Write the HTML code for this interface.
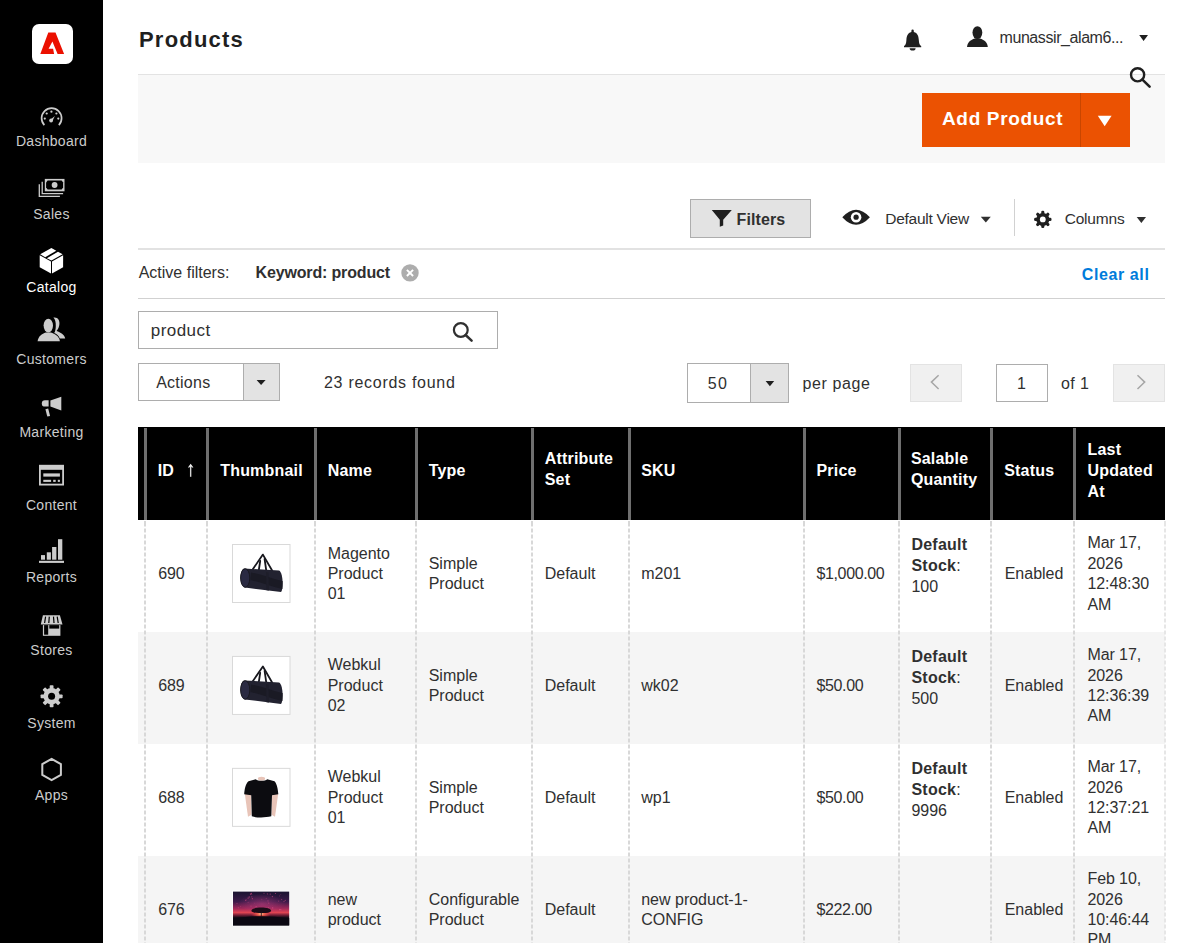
<!DOCTYPE html>
<html><head><meta charset="utf-8"><title>Products</title>
<style>
html,body{margin:0;padding:0;}
body{width:1200px;height:943px;overflow:hidden;position:relative;background:#fff;font-family:"Liberation Sans", sans-serif;color:#303030;}
.t{position:absolute;white-space:nowrap;}
.r{position:absolute;}
svg.r{overflow:visible;}
</style></head><body>
<div class="r" style="left:0px;top:0px;width:103px;height:943px;background:#000;"></div>
<div class="r" style="left:32px;top:24px;width:41px;height:40px;background:#fff;border-radius:7px;"></div>
<svg class="r" style="left:0px;top:0px;" width="103" height="80" viewBox="0 0 103 80"><polygon fill="#eb1000" points="48.3,32.6 55.5,32.6 64.1,54 57.6,54 52.4,41.6 48.6,48.8 53.1,48.8 54.1,54 40.3,54"/></svg>
<div class="t" style="left:0;width:103px;text-align:center;top:133.37px;font-size:14px;line-height:16px;color:#cccccc;letter-spacing:0.3px;">Dashboard</div>
<div class="t" style="left:0;width:103px;text-align:center;top:206.04px;font-size:14px;line-height:16px;color:#cccccc;letter-spacing:0.3px;">Sales</div>
<div class="t" style="left:0;width:103px;text-align:center;top:278.71px;font-size:14px;line-height:16px;color:#ffffff;letter-spacing:0.3px;">Catalog</div>
<div class="t" style="left:0;width:103px;text-align:center;top:351.38px;font-size:14px;line-height:16px;color:#cccccc;letter-spacing:0.3px;">Customers</div>
<div class="t" style="left:0;width:103px;text-align:center;top:424.05px;font-size:14px;line-height:16px;color:#cccccc;letter-spacing:0.3px;">Marketing</div>
<div class="t" style="left:0;width:103px;text-align:center;top:496.72px;font-size:14px;line-height:16px;color:#cccccc;letter-spacing:0.3px;">Content</div>
<div class="t" style="left:0;width:103px;text-align:center;top:569.39px;font-size:14px;line-height:16px;color:#cccccc;letter-spacing:0.3px;">Reports</div>
<div class="t" style="left:0;width:103px;text-align:center;top:642.06px;font-size:14px;line-height:16px;color:#cccccc;letter-spacing:0.3px;">Stores</div>
<div class="t" style="left:0;width:103px;text-align:center;top:714.73px;font-size:14px;line-height:16px;color:#cccccc;letter-spacing:0.3px;">System</div>
<div class="t" style="left:0;width:103px;text-align:center;top:787.40px;font-size:14px;line-height:16px;color:#cccccc;letter-spacing:0.3px;">Apps</div>
<svg class="r" style="left:0px;top:0px;" width="103" height="943" viewBox="0 0 103 943"><path d="M44.36,125.1 A10,10 0 1 1 58.84,125.1" fill="none" stroke="#cccccc" stroke-width="1.7"/><g fill="#cccccc"><circle cx="51.4" cy="111.7" r="1.1"/><circle cx="46.7" cy="113.5" r="1.1"/><circle cx="56.4" cy="113.5" r="1.1"/><circle cx="44.8" cy="118.6" r="1.1"/><circle cx="58.3" cy="118.6" r="1.1"/><circle cx="51.1" cy="120.5" r="1.9"/><polygon points="50,120 52.3,121.2 54.9,115.9"/></g><g fill="none" stroke="#cccccc" stroke-width="1.3"><polyline points="42.2,181.7 42.2,193.6 63.1,193.6"/><polyline points="39.3,184.2 39.3,196.3 59.9,196.3"/></g><rect x="44.8" y="178.9" width="19.7" height="12.4" fill="#cccccc"/><polygon fill="#000" points="47.6,180.6 61.6,180.6 63.1,182.4 63.1,187.6 61.6,189.5 47.6,189.5 46.1,187.6 46.1,182.4"/><circle cx="54.6" cy="185" r="2.9" fill="#cccccc"/><g fill="#fff"><polygon points="39.7,255.2 51,261.6 51,273.6 39.7,267.3"/><polygon points="52,261.6 63.1,255.2 63.1,267.3 52,273.6"/><polygon points="40.2,254.2 51.4,247.9 56.3,250.7 45.2,257.2"/><polygon points="46.9,258.2 58,251.7 62.6,254.3 51.4,260.6"/></g><g fill="#cccccc"><path d="M53.4,317.6 C57.6,316.7 60.4,320.5 59.2,325.5 C58.6,328.3 57.4,330 56.6,331 C60.5,332.6 64.4,334.6 65.2,338.4 L59.8,338.4 C58.8,335.5 56.5,333.9 54.2,333 C55.3,331.5 55.7,329 55.8,326 C55.9,322.2 55.2,319.3 53.4,317.6 Z"/><ellipse cx="48.3" cy="325.6" rx="4.7" ry="6.8"/><path d="M37.6,341.2 C38.2,336 42,333.8 45.8,332.4 L50.8,332.4 C54.8,333.8 59.3,336 59.9,341.2 Z"/></g><g fill="#cccccc"><path d="M48.6,400.2 L45,400.2 A3.2,3.2 0 0 0 45,406.6 L48.6,406.6 Z"/><polygon points="50.4,400.4 61.3,396.7 61.3,410.5 50.4,406.4"/><polygon points="45.4,409.2 48.2,408.6 50.1,416 47.3,416.4"/></g><rect x="39.9" y="465.8" width="23.2" height="18.8" fill="none" stroke="#cccccc" stroke-width="1.8"/><g fill="#cccccc"><rect x="39" y="464.9" width="25" height="4.9"/><rect x="43.3" y="473.4" width="16.6" height="3.2"/><rect x="43.3" y="479.8" width="7.8" height="2.1"/><rect x="53.2" y="479.8" width="2.5" height="2.1"/><rect x="57.8" y="479.8" width="2.1" height="2.1"/></g><g fill="#cccccc"><rect x="41" y="555.1" width="4" height="4.6"/><rect x="46.8" y="552.3" width="4.1" height="7.4"/><rect x="52.1" y="547" width="4.3" height="12.7"/><rect x="58" y="539.2" width="4.3" height="20.5"/><rect x="39" y="560.8" width="25" height="2.1"/></g><polygon fill="#cccccc" points="42.9,615.2 59.9,615.2 62.5,624.4 40.8,624.4"/><g stroke="#000" stroke-width="1.2"><line x1="45.6" y1="616.6" x2="44.6" y2="623"/><line x1="49.3" y1="616.6" x2="48.8" y2="623"/><line x1="53.5" y1="616.6" x2="54" y2="623"/><line x1="57.2" y1="616.6" x2="58.2" y2="623"/></g><rect x="42.9" y="625.1" width="17.5" height="10.7" fill="#cccccc"/><rect x="44.1" y="625.1" width="4.1" height="9.6" fill="#000"/><rect x="49.3" y="625.1" width="9.9" height="3.5" fill="#000"/><g transform="translate(51.6,696.3)" fill="#cccccc"><circle r="8.2"/><rect x="-1.9" y="-11" width="3.8" height="5" rx="0.8" transform="rotate(0)"/><rect x="-1.9" y="-11" width="3.8" height="5" rx="0.8" transform="rotate(45)"/><rect x="-1.9" y="-11" width="3.8" height="5" rx="0.8" transform="rotate(90)"/><rect x="-1.9" y="-11" width="3.8" height="5" rx="0.8" transform="rotate(135)"/><rect x="-1.9" y="-11" width="3.8" height="5" rx="0.8" transform="rotate(180)"/><rect x="-1.9" y="-11" width="3.8" height="5" rx="0.8" transform="rotate(225)"/><rect x="-1.9" y="-11" width="3.8" height="5" rx="0.8" transform="rotate(270)"/><rect x="-1.9" y="-11" width="3.8" height="5" rx="0.8" transform="rotate(315)"/><circle r="3.5" fill="#000"/></g><polygon fill="none" stroke="#cccccc" stroke-width="2" points="51.6,758.9 60.9,764.2 60.9,774.9 51.6,780.2 42.3,774.9 42.3,764.2"/></svg>
<div class="t" style="left:139px;top:27.33px;font-size:22px;line-height:26.4px;font-weight:700;color:#1f1f1f;letter-spacing:1.2px;">Products</div>
<svg class="r" style="left:0px;top:0px;" width="1200" height="100" viewBox="0 0 1200 100"><g fill="#1f1f1f"><path d="M912.6,29.5 a1.2,1.2 0 0 1 1.2,1.2 L913.8,32 C917.6,33 918.6,36 918.8,40 C919,43.5 919.6,45 921.2,46 L921.2,47.3 L904,47.3 L904,46 C905.6,45 906.2,43.5 906.4,40 C906.6,36 907.6,33 911.4,32 L911.4,30.7 a1.2,1.2 0 0 1 1.2,-1.2 Z"/><path d="M909.6,48.3 L915.6,48.3 A3,2.3 0 0 1 909.6,48.3 Z"/></g><g fill="#1f1f1f"><ellipse cx="977.4" cy="32.6" rx="4.9" ry="6.4"/><path d="M967,47 C967.4,42 971,40 974.6,38.6 L980.2,38.6 C983.8,40 987.4,42 987.8,47 Z"/></g><polygon fill="#1f1f1f" points="1139.2,35 1148,35 1143.6,41"/></svg>
<div class="t" style="left:999.5px;top:27.91px;font-size:16px;line-height:19.2px;letter-spacing:-0.42px;">munassir_alam6...</div>
<div class="r" style="left:138px;top:74px;width:1027px;height:89px;background:#f8f8f8;border-top:1px solid #e3e3e3;box-sizing:border-box;"></div>
<div class="r" style="left:922px;top:92.5px;width:208px;height:54px;background:#eb5202;"></div>
<div class="r" style="left:1080px;top:92.5px;width:1px;height:54px;background:#c94600;"></div>
<div class="t" style="left:942px;top:107.92px;font-size:19px;line-height:22.8px;font-weight:700;color:#fff;letter-spacing:0.65px;">Add Product</div>
<svg class="r" style="left:0px;top:0px;" width="1200" height="200" viewBox="0 0 1200 200"><polygon fill="#fff" points="1097.8,115.7 1111.6,115.7 1104.7,126.2"/></svg>
<svg class="r" style="left:0px;top:0px;" width="1200" height="100" viewBox="0 0 1200 100"><circle cx="1137.6" cy="74.8" r="6.6" fill="none" stroke="#1f1f1f" stroke-width="2.4"/><line x1="1142.4" y1="79.6" x2="1149.6" y2="86.6" stroke="#1f1f1f" stroke-width="2.6" stroke-linecap="round"/></svg>
<div class="r" style="left:690px;top:199px;width:121px;height:39px;background:#e3e3e3;border:1px solid #adadad;box-sizing:border-box;"></div>
<svg class="r" style="left:0px;top:0px;" width="1200" height="300" viewBox="0 0 1200 300"><path fill="#1f1f1f" d="M711.8,209.9 L731.8,209.9 L723.2,219.8 L723.2,225.4 L719.8,226.8 L719.8,219.8 Z"/><path fill="#1f1f1f" d="M842.3,217.2 Q856,202.2 869.9,217.2 Q856,232.2 842.3,217.2 Z"/><circle cx="856.1" cy="217.2" r="5.3" fill="#fff"/><circle cx="856.1" cy="217.2" r="2.6" fill="#1f1f1f"/><polygon fill="#303030" points="980.8,216.8 990.8,216.8 985.8,222.6"/><polygon fill="#303030" points="1136.7,216.9 1146,216.9 1141.35,222.9"/><g transform="translate(1042.8,219.4)" fill="#1f1f1f"><circle r="6.5"/><rect x="-1.55" y="-8.7" width="3.1" height="4.2" rx="1.3" transform="rotate(0)"/><rect x="-1.55" y="-8.7" width="3.1" height="4.2" rx="1.3" transform="rotate(45)"/><rect x="-1.55" y="-8.7" width="3.1" height="4.2" rx="1.3" transform="rotate(90)"/><rect x="-1.55" y="-8.7" width="3.1" height="4.2" rx="1.3" transform="rotate(135)"/><rect x="-1.55" y="-8.7" width="3.1" height="4.2" rx="1.3" transform="rotate(180)"/><rect x="-1.55" y="-8.7" width="3.1" height="4.2" rx="1.3" transform="rotate(225)"/><rect x="-1.55" y="-8.7" width="3.1" height="4.2" rx="1.3" transform="rotate(270)"/><rect x="-1.55" y="-8.7" width="3.1" height="4.2" rx="1.3" transform="rotate(315)"/><circle r="2.9" fill="#fff"/></g></svg>
<div class="t" style="left:736.6px;top:209.51px;font-size:16px;line-height:19.2px;font-weight:700;letter-spacing:0.1px;">Filters</div>
<div class="t" style="left:885.2px;top:209.78px;font-size:15.5px;line-height:18.6px;letter-spacing:-0.25px;">Default View</div>
<div class="r" style="left:1013.5px;top:199px;width:1px;height:37px;background:#d1d1d1;"></div>
<div class="t" style="left:1064.7px;top:209.58px;font-size:15.5px;line-height:18.6px;letter-spacing:-0.2px;">Columns</div>
<div class="r" style="left:138px;top:248px;width:1027px;height:2px;background:#e2e2e2;"></div>
<div class="t" style="left:138.7px;top:262.91px;font-size:16px;line-height:19.2px;">Active filters:</div>
<div class="t" style="left:255.5px;top:262.91px;font-size:16px;line-height:19.2px;font-weight:700;letter-spacing:-0.15px;">Keyword: product</div>
<svg class="r" style="left:0px;top:0px;" width="1200" height="300" viewBox="0 0 1200 300"><circle cx="410" cy="272.9" r="8.7" fill="#adadad"/><path d="M406.9,269.8 L413.1,276 M413.1,269.8 L406.9,276" stroke="#fff" stroke-width="1.9"/></svg>
<div class="t" style="left:1081.8px;top:264.81px;font-size:16px;line-height:19.2px;font-weight:700;color:#007bdb;letter-spacing:0.6px;">Clear all</div>
<div class="r" style="left:138px;top:297.5px;width:1027px;height:1px;background:#d1d1d1;"></div>
<div class="r" style="left:138px;top:311px;width:360px;height:38px;background:#fff;border:1px solid #adadad;box-sizing:border-box;"></div>
<div class="t" style="left:150.8px;top:320.88px;font-size:17px;line-height:20.4px;letter-spacing:0.45px;">product</div>
<svg class="r" style="left:0px;top:0px;" width="1200" height="400" viewBox="0 0 1200 400"><circle cx="460.8" cy="330" r="6.9" fill="none" stroke="#303030" stroke-width="2.2"/><line x1="465.6" y1="335" x2="471.6" y2="340.6" stroke="#303030" stroke-width="2.5" stroke-linecap="round"/></svg>
<div class="r" style="left:138px;top:362.5px;width:142px;height:38.5px;background:#fff;border:1px solid #adadad;box-sizing:border-box;"></div>
<div class="r" style="left:242.5px;top:362.5px;width:37.5px;height:38.5px;background:#e3e3e3;border:1px solid #adadad;box-sizing:border-box;"></div>
<div class="t" style="left:156.2px;top:373.11px;font-size:16px;line-height:19.2px;letter-spacing:0.25px;">Actions</div>
<svg class="r" style="left:0px;top:0px;" width="1200" height="400" viewBox="0 0 1200 400"><polygon fill="#1f1f1f" points="256.6,380 265.6,380 261.1,385"/></svg>
<div class="t" style="left:324px;top:373.11px;font-size:16px;line-height:19.2px;letter-spacing:0.72px;">23 records found</div>
<div class="r" style="left:687px;top:362.5px;width:102px;height:40.5px;background:#fff;border:1px solid #adadad;box-sizing:border-box;"></div>
<div class="r" style="left:750px;top:362.5px;width:39px;height:40.5px;background:#e3e3e3;border:1px solid #adadad;box-sizing:border-box;"></div>
<div class="t" style="left:707.7px;top:374.11px;font-size:16px;line-height:19.2px;letter-spacing:1.5px;">50</div>
<svg class="r" style="left:0px;top:0px;" width="1200" height="400" viewBox="0 0 1200 400"><polygon fill="#1f1f1f" points="765.6,381 774.2,381 769.9,386.2"/></svg>
<div class="t" style="left:802.5px;top:374.11px;font-size:16px;line-height:19.2px;letter-spacing:0.6px;">per page</div>
<div class="r" style="left:910px;top:363.5px;width:52px;height:38.5px;background:#f0f0f0;border:1px solid #e3e3e3;box-sizing:border-box;"></div>
<div class="r" style="left:996px;top:363.5px;width:51.5px;height:38.5px;background:#fff;border:1px solid #adadad;box-sizing:border-box;"></div>
<div class="r" style="left:1113px;top:363.5px;width:52px;height:38.5px;background:#f0f0f0;border:1px solid #e3e3e3;box-sizing:border-box;"></div>
<svg class="r" style="left:0px;top:0px;" width="1200" height="400" viewBox="0 0 1200 400"><polyline fill="none" stroke="#a6a6a6" stroke-width="1.5" points="938.6,375.2 931.4,382.1 938.6,389"/><polyline fill="none" stroke="#a6a6a6" stroke-width="1.5" points="1137.5,375.2 1144.7,382.1 1137.5,389"/></svg>
<div class="t" style="left:1017px;top:374.11px;font-size:16px;line-height:19.2px;">1</div>
<div class="t" style="left:1060.9px;top:374.11px;font-size:16px;line-height:19.2px;letter-spacing:0.4px;">of 1</div>
<div class="r" style="left:138px;top:520px;width:1027px;height:112px;background:#fff;"></div>
<div class="r" style="left:138px;top:632px;width:1027px;height:112px;background:#f5f5f5;"></div>
<div class="r" style="left:138px;top:744px;width:1027px;height:112px;background:#fff;"></div>
<div class="r" style="left:138px;top:856px;width:1027px;height:87px;background:#f5f5f5;"></div>
<div class="r" style="left:144px;top:521px;width:2px;height:422px;background:repeating-linear-gradient(to bottom,#d8d8d8 0,#d8d8d8 3.6px,transparent 3.6px,transparent 6px);background-position:0 1.5px;"></div>
<div class="r" style="left:206px;top:521px;width:2px;height:422px;background:repeating-linear-gradient(to bottom,#d8d8d8 0,#d8d8d8 3.6px,transparent 3.6px,transparent 6px);background-position:0 1.5px;"></div>
<div class="r" style="left:314px;top:521px;width:2px;height:422px;background:repeating-linear-gradient(to bottom,#d8d8d8 0,#d8d8d8 3.6px,transparent 3.6px,transparent 6px);background-position:0 1.5px;"></div>
<div class="r" style="left:415px;top:521px;width:2px;height:422px;background:repeating-linear-gradient(to bottom,#d8d8d8 0,#d8d8d8 3.6px,transparent 3.6px,transparent 6px);background-position:0 1.5px;"></div>
<div class="r" style="left:531px;top:521px;width:2px;height:422px;background:repeating-linear-gradient(to bottom,#d8d8d8 0,#d8d8d8 3.6px,transparent 3.6px,transparent 6px);background-position:0 1.5px;"></div>
<div class="r" style="left:628px;top:521px;width:2px;height:422px;background:repeating-linear-gradient(to bottom,#d8d8d8 0,#d8d8d8 3.6px,transparent 3.6px,transparent 6px);background-position:0 1.5px;"></div>
<div class="r" style="left:803px;top:521px;width:2px;height:422px;background:repeating-linear-gradient(to bottom,#d8d8d8 0,#d8d8d8 3.6px,transparent 3.6px,transparent 6px);background-position:0 1.5px;"></div>
<div class="r" style="left:898px;top:521px;width:2px;height:422px;background:repeating-linear-gradient(to bottom,#d8d8d8 0,#d8d8d8 3.6px,transparent 3.6px,transparent 6px);background-position:0 1.5px;"></div>
<div class="r" style="left:990px;top:521px;width:2px;height:422px;background:repeating-linear-gradient(to bottom,#d8d8d8 0,#d8d8d8 3.6px,transparent 3.6px,transparent 6px);background-position:0 1.5px;"></div>
<div class="r" style="left:1073px;top:521px;width:2px;height:422px;background:repeating-linear-gradient(to bottom,#d8d8d8 0,#d8d8d8 3.6px,transparent 3.6px,transparent 6px);background-position:0 1.5px;"></div>
<div class="r" style="left:1164px;top:521px;width:1.5px;height:422px;background:repeating-linear-gradient(to bottom,#e6e6e6 0,#e6e6e6 3.6px,transparent 3.6px,transparent 6px);background-position:0 1.5px;"></div>
<div class="r" style="left:138px;top:427px;width:1027px;height:93px;background:#000;"></div>
<div class="r" style="left:144px;top:428px;width:2.5px;height:92px;background:#6f6f6f;"></div>
<div class="r" style="left:206px;top:428px;width:2.5px;height:92px;background:#6f6f6f;"></div>
<div class="r" style="left:314px;top:428px;width:2.5px;height:92px;background:#6f6f6f;"></div>
<div class="r" style="left:415px;top:428px;width:2.5px;height:92px;background:#6f6f6f;"></div>
<div class="r" style="left:531px;top:428px;width:2.5px;height:92px;background:#6f6f6f;"></div>
<div class="r" style="left:628px;top:428px;width:2.5px;height:92px;background:#6f6f6f;"></div>
<div class="r" style="left:803px;top:428px;width:2.5px;height:92px;background:#6f6f6f;"></div>
<div class="r" style="left:898px;top:428px;width:2.5px;height:92px;background:#6f6f6f;"></div>
<div class="r" style="left:990px;top:428px;width:2.5px;height:92px;background:#6f6f6f;"></div>
<div class="r" style="left:1073px;top:428px;width:2.5px;height:92px;background:#6f6f6f;"></div>
<div class="t" style="left:157.7px;top:460.71px;font-size:16px;line-height:20.6px;font-weight:700;color:#ffffff;letter-spacing:0.2px;">ID</div>
<svg class="r" style="left:0px;top:0px;" width="1200" height="943" viewBox="0 0 1200 943"><line x1="190.65" y1="465.5" x2="190.65" y2="476.8" stroke="#d4d4d4" stroke-width="1.4"/><polygon fill="#f0f0f0" points="187.9,467.4 190.65,463.7 193.4,467.4 192,467.6 190.65,466 189.3,467.6"/></svg>
<div class="t" style="left:220.2px;top:460.71px;font-size:16px;line-height:20.6px;font-weight:700;color:#ffffff;letter-spacing:0.2px;">Thumbnail</div>
<div class="t" style="left:327.7px;top:460.71px;font-size:16px;line-height:20.6px;font-weight:700;color:#ffffff;letter-spacing:0.2px;">Name</div>
<div class="t" style="left:428.7px;top:460.71px;font-size:16px;line-height:20.6px;font-weight:700;color:#ffffff;letter-spacing:0.2px;">Type</div>
<div class="t" style="left:544.7px;top:449.41px;font-size:16px;line-height:20.6px;font-weight:700;color:#ffffff;letter-spacing:0.2px;">Attribute<br>Set</div>
<div class="t" style="left:641.2px;top:460.71px;font-size:16px;line-height:20.6px;font-weight:700;color:#ffffff;letter-spacing:0.2px;">SKU</div>
<div class="t" style="left:816.5px;top:460.71px;font-size:16px;line-height:20.6px;font-weight:700;color:#ffffff;letter-spacing:0.2px;">Price</div>
<div class="t" style="left:910.9000000000001px;top:449.41px;font-size:16px;line-height:20.6px;font-weight:700;color:#ffffff;letter-spacing:0.2px;">Salable<br>Quantity</div>
<div class="t" style="left:1004.2px;top:460.71px;font-size:16px;line-height:20.6px;font-weight:700;color:#ffffff;letter-spacing:0.2px;">Status</div>
<div class="t" style="left:1087.5px;top:439.01px;font-size:16px;line-height:21px;font-weight:700;color:#ffffff;letter-spacing:0.2px;">Last<br>Updated<br>At</div>
<div class="t" style="left:158.2px;top:563.91px;font-size:16px;line-height:20.4px;letter-spacing:-0.15px;">690</div>
<div class="t" style="left:327.7px;top:543.51px;font-size:16px;line-height:20.4px;">Magento<br>Product<br>01</div>
<div class="t" style="left:428.7px;top:553.71px;font-size:16px;line-height:20.4px;">Simple<br>Product</div>
<div class="t" style="left:544.7px;top:563.91px;font-size:16px;line-height:20.4px;">Default</div>
<div class="t" style="left:641.2px;top:563.91px;font-size:16px;line-height:20.4px;">m201</div>
<div class="t" style="left:816.4000000000001px;top:563.91px;font-size:16px;line-height:20.4px;letter-spacing:-0.35px;">$1,000.00</div>
<div class="t" style="left:911.4px;top:534.41px;font-size:16px;line-height:21px;"><b style="letter-spacing:0.25px">Default<br>Stock</b>:<br>100</div>
<div class="t" style="left:1004.7px;top:563.91px;font-size:16px;line-height:20.4px;">Enabled</div>
<div class="t" style="left:1087.5px;top:533.31px;font-size:16px;line-height:20.4px;letter-spacing:-0.1px;">Mar 17,<br>2026<br>12:48:30<br>AM</div>
<div class="t" style="left:158.2px;top:675.84px;font-size:16px;line-height:20.4px;letter-spacing:-0.15px;">689</div>
<div class="t" style="left:327.7px;top:655.44px;font-size:16px;line-height:20.4px;">Webkul<br>Product<br>02</div>
<div class="t" style="left:428.7px;top:665.64px;font-size:16px;line-height:20.4px;">Simple<br>Product</div>
<div class="t" style="left:544.7px;top:675.84px;font-size:16px;line-height:20.4px;">Default</div>
<div class="t" style="left:641.2px;top:675.84px;font-size:16px;line-height:20.4px;">wk02</div>
<div class="t" style="left:816.4000000000001px;top:675.84px;font-size:16px;line-height:20.4px;letter-spacing:-0.35px;">$50.00</div>
<div class="t" style="left:911.4px;top:646.34px;font-size:16px;line-height:21px;"><b style="letter-spacing:0.25px">Default<br>Stock</b>:<br>500</div>
<div class="t" style="left:1004.7px;top:675.84px;font-size:16px;line-height:20.4px;">Enabled</div>
<div class="t" style="left:1087.5px;top:645.24px;font-size:16px;line-height:20.4px;letter-spacing:-0.1px;">Mar 17,<br>2026<br>12:36:39<br>AM</div>
<div class="t" style="left:158.2px;top:787.77px;font-size:16px;line-height:20.4px;letter-spacing:-0.15px;">688</div>
<div class="t" style="left:327.7px;top:767.37px;font-size:16px;line-height:20.4px;">Webkul<br>Product<br>01</div>
<div class="t" style="left:428.7px;top:777.57px;font-size:16px;line-height:20.4px;">Simple<br>Product</div>
<div class="t" style="left:544.7px;top:787.77px;font-size:16px;line-height:20.4px;">Default</div>
<div class="t" style="left:641.2px;top:787.77px;font-size:16px;line-height:20.4px;">wp1</div>
<div class="t" style="left:816.4000000000001px;top:787.77px;font-size:16px;line-height:20.4px;letter-spacing:-0.35px;">$50.00</div>
<div class="t" style="left:911.4px;top:758.27px;font-size:16px;line-height:21px;"><b style="letter-spacing:0.25px">Default<br>Stock</b>:<br>9996</div>
<div class="t" style="left:1004.7px;top:787.77px;font-size:16px;line-height:20.4px;">Enabled</div>
<div class="t" style="left:1087.5px;top:757.17px;font-size:16px;line-height:20.4px;letter-spacing:-0.1px;">Mar 17,<br>2026<br>12:37:21<br>AM</div>
<div class="t" style="left:158.2px;top:899.70px;font-size:16px;line-height:20.4px;letter-spacing:-0.15px;">676</div>
<div class="t" style="left:327.7px;top:889.50px;font-size:16px;line-height:20.4px;">new<br>product</div>
<div class="t" style="left:428.7px;top:889.50px;font-size:16px;line-height:20.4px;">Configurable<br>Product</div>
<div class="t" style="left:544.7px;top:899.70px;font-size:16px;line-height:20.4px;">Default</div>
<div class="t" style="left:641.2px;top:889.50px;font-size:16px;line-height:20.4px;">new product-1-<br>CONFIG</div>
<div class="t" style="left:816.4000000000001px;top:899.70px;font-size:16px;line-height:20.4px;letter-spacing:-0.35px;">$222.00</div>
<div class="t" style="left:1004.7px;top:899.70px;font-size:16px;line-height:20.4px;">Enabled</div>
<div class="t" style="left:1087.5px;top:869.10px;font-size:16px;line-height:20.4px;letter-spacing:-0.1px;">Feb 10,<br>2026<br>10:46:44<br>PM</div>
<svg class="r" style="left:0px;top:0px;" width="1200" height="943" viewBox="0 0 1200 943"><rect x="232.5" y="544.5" width="57.5" height="58" fill="#fff" stroke="#d9d9d9" stroke-width="1"/><g fill="none" stroke="#17171d" stroke-width="1.8" stroke-linejoin="round" stroke-linecap="round"><polyline points="252.6,569.5 262.9,554.6 272.1,570.5"/><polyline points="258.9,569.5 260.2,561"/><polyline points="264.6,559 266.6,573"/></g><path fill="#222230" d="M244,568.5 L279,570.5 C283.2,572 283.6,590 281,592 L245,587.5 C239.3,586 239.3,570 244,568.5 Z"/><ellipse cx="245.2" cy="578" rx="4.6" ry="9.3" fill="#2a2a42" stroke="#16161c" stroke-width="0.9"/><path fill="#1a1a24" d="M251,572.5 C262,574 272,579 282.6,581 L282.4,589 C272,587 260,582 250.5,580 Z"/><path fill="#1e1e2a" d="M266,572 L268.5,572.5 L269,590.5 L266.5,590.3 Z"/><rect x="232.5" y="656.4300000000001" width="57.5" height="58" fill="#fff" stroke="#d9d9d9" stroke-width="1"/><g fill="none" stroke="#17171d" stroke-width="1.8" stroke-linejoin="round" stroke-linecap="round"><polyline points="252.6,681.4300000000001 262.9,666.53 272.1,682.4300000000001"/><polyline points="258.9,681.4300000000001 260.2,672.9300000000001"/><polyline points="264.6,670.9300000000001 266.6,684.9300000000001"/></g><path fill="#222230" d="M244,680.4300000000001 L279,682.4300000000001 C283.2,683.9300000000001 283.6,701.9300000000001 281,703.9300000000001 L245,699.4300000000001 C239.3,697.9300000000001 239.3,681.9300000000001 244,680.4300000000001 Z"/><ellipse cx="245.2" cy="689.9300000000001" rx="4.6" ry="9.3" fill="#2a2a42" stroke="#16161c" stroke-width="0.9"/><path fill="#1a1a24" d="M251,684.4300000000001 C262,685.9300000000001 272,690.9300000000001 282.6,692.9300000000001 L282.4,700.9300000000001 C272,698.9300000000001 260,693.9300000000001 250.5,691.9300000000001 Z"/><path fill="#1e1e2a" d="M266,683.9300000000001 L268.5,684.4300000000001 L269,702.4300000000001 L266.5,702.23 Z"/><rect x="232.5" y="768.36" width="57.5" height="58" fill="#fff" stroke="#d9d9d9" stroke-width="1"/><g fill="#e8c4b8"><ellipse cx="261.5" cy="778.66" rx="3.6" ry="1.8"/><path d="M244.8,793.86 L250.8,793.86 L251.5,814.86 L248,816.86 Z"/><path d="M272.2,793.86 L278.2,793.86 L275,816.86 L271.5,814.86 Z"/></g><path fill="#0c0c10" d="M255.8,779.16 C258,781.16 265,781.16 267.2,779.16 L274.5,781.36 C277,783.86 278,789.86 278.3,794.36 L272,795.36 L271.3,816.36 C265,817.86 257,817.86 251.8,816.36 L251.2,795.36 L244.2,794.36 C244.5,789.86 245.5,783.86 248.5,781.36 Z"/><defs><linearGradient id="sky" x1="0" y1="0" x2="0" y2="1"><stop offset="0" stop-color="#1a1430"/><stop offset="0.3" stop-color="#3c1a4a"/><stop offset="0.5" stop-color="#a0285a"/><stop offset="0.62" stop-color="#e04452"/><stop offset="0.69" stop-color="#7a2038"/><stop offset="0.76" stop-color="#1c0e1a"/><stop offset="1" stop-color="#0a0810"/></linearGradient><radialGradient id="glow" cx="0.5" cy="0.5" r="0.5"><stop offset="0" stop-color="#ffe0b0"/><stop offset="0.3" stop-color="#ff7050" stop-opacity="0.85"/><stop offset="1" stop-color="#ff3040" stop-opacity="0"/></radialGradient><radialGradient id="pink" cx="0.5" cy="0.6" r="0.5"><stop offset="0" stop-color="#c04080" stop-opacity="0.55"/><stop offset="1" stop-color="#c04080" stop-opacity="0"/></radialGradient></defs><rect x="232.3" y="890.6" width="57.5" height="35.6" fill="#fff"/><rect x="233" y="891.6" width="56.2" height="33.8" fill="url(#sky)"/><ellipse cx="262" cy="902" rx="24" ry="10" fill="url(#pink)"/><circle cx="248.1" cy="902.3" r="0.48" fill="#e0508a" opacity="0.64"/><circle cx="267.9" cy="894.1" r="0.35" fill="#e0508a" opacity="0.73"/><circle cx="249.2" cy="897.0" r="0.70" fill="#e0508a" opacity="0.59"/><circle cx="278.7" cy="901.1" r="0.57" fill="#e0508a" opacity="0.46"/><circle cx="268.4" cy="907.8" r="0.53" fill="#e0508a" opacity="0.70"/><circle cx="270.2" cy="894.1" r="0.62" fill="#e0508a" opacity="0.64"/><circle cx="251.4" cy="893.5" r="0.65" fill="#e0508a" opacity="0.59"/><circle cx="272.7" cy="907.9" r="0.60" fill="#e0508a" opacity="0.77"/><circle cx="256.1" cy="906.6" r="0.51" fill="#e0508a" opacity="0.77"/><circle cx="280.8" cy="894.7" r="0.40" fill="#e0508a" opacity="0.49"/><circle cx="285.2" cy="900.4" r="0.57" fill="#e0508a" opacity="0.52"/><circle cx="261.9" cy="899.6" r="0.47" fill="#e0508a" opacity="0.63"/><circle cx="265.8" cy="908.4" r="0.59" fill="#e0508a" opacity="0.77"/><circle cx="279.7" cy="909.8" r="0.58" fill="#e0508a" opacity="0.47"/><circle cx="279.9" cy="909.4" r="0.67" fill="#e0508a" opacity="0.63"/><circle cx="272.4" cy="896.6" r="0.64" fill="#e0508a" opacity="0.63"/><circle cx="250.5" cy="894.1" r="0.65" fill="#e0508a" opacity="0.80"/><circle cx="240.5" cy="906.6" r="0.49" fill="#e0508a" opacity="0.46"/><circle cx="251.0" cy="906.1" r="0.66" fill="#e0508a" opacity="0.42"/><circle cx="267.3" cy="893.8" r="0.60" fill="#e0508a" opacity="0.53"/><circle cx="280.9" cy="909.7" r="0.53" fill="#e0508a" opacity="0.80"/><circle cx="251.8" cy="894.3" r="0.56" fill="#e0508a" opacity="0.41"/><circle cx="246.1" cy="899.9" r="0.56" fill="#e0508a" opacity="0.46"/><circle cx="238.2" cy="907.8" r="0.46" fill="#e0508a" opacity="0.78"/><circle cx="281.7" cy="899.4" r="0.51" fill="#e0508a" opacity="0.61"/><circle cx="268.8" cy="903.1" r="0.55" fill="#e0508a" opacity="0.65"/><circle cx="284.0" cy="901.6" r="0.50" fill="#e0508a" opacity="0.69"/><circle cx="248.1" cy="898.1" r="0.69" fill="#e0508a" opacity="0.61"/><circle cx="264.0" cy="893.2" r="0.50" fill="#e0508a" opacity="0.63"/><circle cx="237.0" cy="903.5" r="0.57" fill="#e0508a" opacity="0.42"/><circle cx="268.0" cy="900.9" r="0.59" fill="#e0508a" opacity="0.54"/><circle cx="272.1" cy="905.5" r="0.36" fill="#e0508a" opacity="0.42"/><circle cx="270.5" cy="909.4" r="0.44" fill="#e0508a" opacity="0.58"/><circle cx="266.2" cy="898.4" r="0.48" fill="#e0508a" opacity="0.53"/><circle cx="254.8" cy="903.1" r="0.46" fill="#e0508a" opacity="0.55"/><circle cx="275.4" cy="893.5" r="0.55" fill="#e0508a" opacity="0.69"/><circle cx="251.8" cy="896.8" r="0.63" fill="#e0508a" opacity="0.50"/><circle cx="245.6" cy="900.4" r="0.59" fill="#e0508a" opacity="0.44"/><circle cx="252.4" cy="898.7" r="0.64" fill="#e0508a" opacity="0.58"/><circle cx="279.6" cy="895.9" r="0.47" fill="#e0508a" opacity="0.66"/><ellipse cx="261" cy="914" rx="10" ry="4.5" fill="url(#glow)"/><path d="M251.3,911 C251.5,908.5 256,907.6 261.2,907.6 C266.5,907.6 271,908.5 271.2,911 C270,913 265,913.2 261.2,913 C257,913.2 252.5,913 251.3,911 Z" fill="#1c0c18"/><rect x="260.8" y="912" width="0.9" height="4.5" fill="#2a1018"/><path d="M233,918 C245,917 255,916 261,916.2 C268,916 278,917 289.2,918 L289.2,925.4 L233,925.4 Z" fill="#0b0812"/></svg>
</body></html>
